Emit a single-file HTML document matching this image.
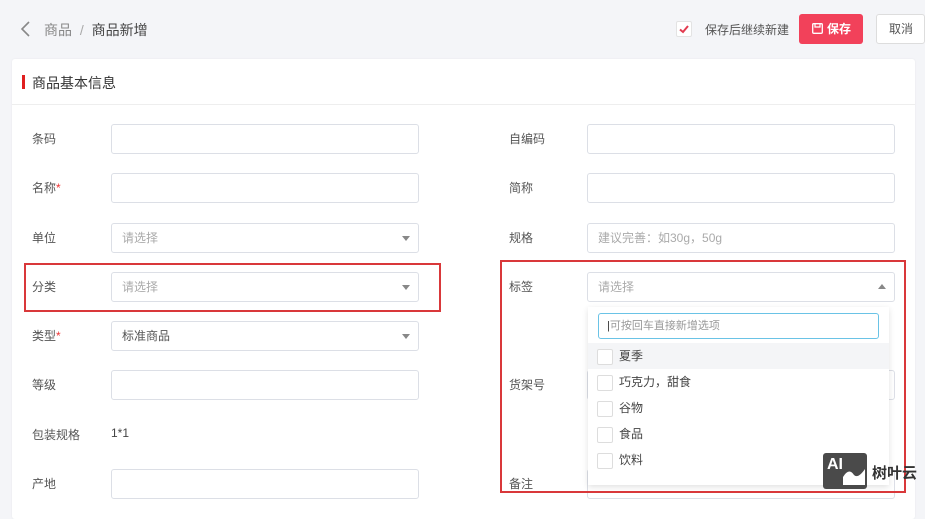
<!DOCTYPE html>
<html><head><meta charset="utf-8"><style>
*{box-sizing:border-box;margin:0;padding:0}
body{width:925px;height:500px;overflow:hidden;background:#f4f5f8;font-family:"Liberation Sans","Noto Sans CJK SC",sans-serif;font-size:12px;color:#555;position:relative}
.a{position:absolute}
.card{left:12px;top:59px;width:903px;height:460px;background:#fff;border-radius:3px;box-shadow:0 0 2px rgba(0,0,0,.06)}
.inp{position:absolute;height:30px;border:1px solid #dcdfe6;border-radius:3px;background:#fff;color:#aaa;padding-left:10px;line-height:28px;font-size:12px}
.lbl{position:absolute;font-size:12px;color:#555;margin-top:-2px}
.arr{position:absolute;right:8px;top:12px;width:0;height:0;border-left:4px solid transparent;border-right:4px solid transparent;border-top:5px solid #888}
.cb{display:inline-block;width:16px;height:16px;border:1px solid #ddd;border-radius:2px;vertical-align:middle;margin-right:6px;background:#fff}
.it{position:absolute;left:0;width:301px;height:26px;line-height:26px;padding-left:9px;font-size:12px;color:#444}
</style></head><body>
<svg class="a" style="left:18px;top:20px" width="14" height="18"><path d="M11 2 L4 9 L11 16" fill="none" stroke="#888" stroke-width="1.6"/></svg>
<div class="a" style="left:44px;top:20px;font-size:14px;color:#888">商品 <span style="color:#aaa;margin:0 4px">/</span> <span style="color:#444">商品新增</span></div>
<div class="a" style="left:676px;top:21px;width:16px;height:16px;background:#fff;border:1px solid #e3e3e3;border-radius:2px"><svg width="14" height="14"><path d="M3 7.5 L6 10 L11 4" fill="none" stroke="#e23a4f" stroke-width="2"/></svg></div>
<div class="a" style="left:705px;top:21px;font-size:12px;color:#555">保存后继续新建</div>
<div class="a" style="left:799px;top:14px;width:64px;height:30px;background:#f2415a;border-radius:3px;color:#fff;font-size:12px;line-height:30px;font-weight:bold"><svg class="a" style="left:13px;top:9px" width="11" height="11"><rect x="0.7" y="0.7" width="9.6" height="9.6" rx="1" fill="none" stroke="#fff" stroke-width="1.3"/><path d="M3 1 V4 H8 V1" fill="none" stroke="#fff" stroke-width="1.2"/></svg><span class="a" style="left:28px;top:0">保存</span></div>
<div class="a" style="left:876px;top:14px;width:49px;height:30px;background:#fff;border:1px solid #ddd;border-radius:3px;font-size:12px;line-height:28px;padding-left:12px;color:#555">取消</div>
<div class="a card"></div>
<div class="a" style="left:22px;top:75px;width:3px;height:14px;background:#e02020"></div>
<div class="a" style="left:32px;top:73px;font-size:14px;color:#333">商品基本信息</div>
<div class="a" style="left:12px;top:104px;width:903px;height:1px;background:#eee"></div>

<div class="lbl" style="left:32px;top:132px">条码</div><div class="inp" style="left:111px;top:124px;width:308px"></div>
<div class="lbl" style="left:32px;top:181px">名称<span style="color:#e33">*</span></div><div class="inp" style="left:111px;top:173px;width:308px"></div>
<div class="lbl" style="left:32px;top:231px">单位</div><div class="inp" style="left:111px;top:223px;width:308px">请选择<i class="arr"></i></div>
<div class="lbl" style="left:32px;top:280px">分类</div><div class="inp" style="left:111px;top:272px;width:308px">请选择<i class="arr"></i></div>
<div class="lbl" style="left:32px;top:329px">类型<span style="color:#e33">*</span></div><div class="inp" style="left:111px;top:321px;width:308px;color:#555">标准商品<i class="arr"></i></div>
<div class="lbl" style="left:32px;top:378px">等级</div><div class="inp" style="left:111px;top:370px;width:308px"></div>
<div class="lbl" style="left:32px;top:428px">包装规格</div><div class="lbl" style="left:111px;top:428px;color:#444">1*1</div>
<div class="lbl" style="left:32px;top:477px">产地</div><div class="inp" style="left:111px;top:469px;width:308px"></div>

<div class="lbl" style="left:509px;top:132px">自编码</div><div class="inp" style="left:587px;top:124px;width:308px"></div>
<div class="lbl" style="left:509px;top:181px">简称</div><div class="inp" style="left:587px;top:173px;width:308px"></div>
<div class="lbl" style="left:509px;top:231px">规格</div><div class="inp" style="left:587px;top:223px;width:308px">建议完善：如30g，50g</div>
<div class="lbl" style="left:509px;top:280px">标签</div><div class="inp" style="left:587px;top:272px;width:308px">请选择<i class="arr" style="border-top:0;border-bottom:5px solid #888;top:11px"></i></div>
<div class="inp" style="left:587px;top:370px;width:308px"></div>
<div class="lbl" style="left:509px;top:378px">货架号</div>
<div class="lbl" style="left:509px;top:477px">备注</div><div class="inp" style="left:587px;top:469px;width:308px"></div>

<div class="a" style="left:588px;top:307px;width:301px;height:178px;background:#fff;box-shadow:0 2px 6px rgba(0,0,0,.12)">
 <div class="a" style="left:10px;top:6px;width:281px;height:26px;border:1px solid #6ac3e6;border-radius:3px;font-size:11px;color:#999;line-height:24px;padding-left:8px"><span style="color:#333">|</span>可按回车直接新增选项</div>
 <div class="it" style="top:36px;background:#f4f5f7"><span class="cb"></span>夏季</div>
 <div class="it" style="top:62px"><span class="cb"></span>巧克力，甜食</div>
 <div class="it" style="top:88px"><span class="cb"></span>谷物</div>
 <div class="it" style="top:114px"><span class="cb"></span>食品</div>
 <div class="it" style="top:140px"><span class="cb"></span>饮料</div>
</div>

<div class="a" style="left:24px;top:263px;width:417px;height:49px;border:2px solid #d9383a"></div>
<div class="a" style="left:500px;top:260px;width:406px;height:233px;border:2px solid #d9383a"></div>

<div class="a" style="left:823px;top:453px;width:44px;height:36px;background:#4a4a4a;border-radius:3px;color:#fff;font-weight:bold;font-size:16px;padding:3px 0 0 4px">AI<svg class="a" style="left:20px;top:12px" width="22" height="20"><path d="M0 20 L0 12 Q6 2 11 10 Q15 14 22 4 L22 20Z" fill="#fff"/></svg></div>
<div class="a" style="left:872px;top:462px;font-size:15px;font-weight:bold;color:#333">树叶云</div>
</body></html>
